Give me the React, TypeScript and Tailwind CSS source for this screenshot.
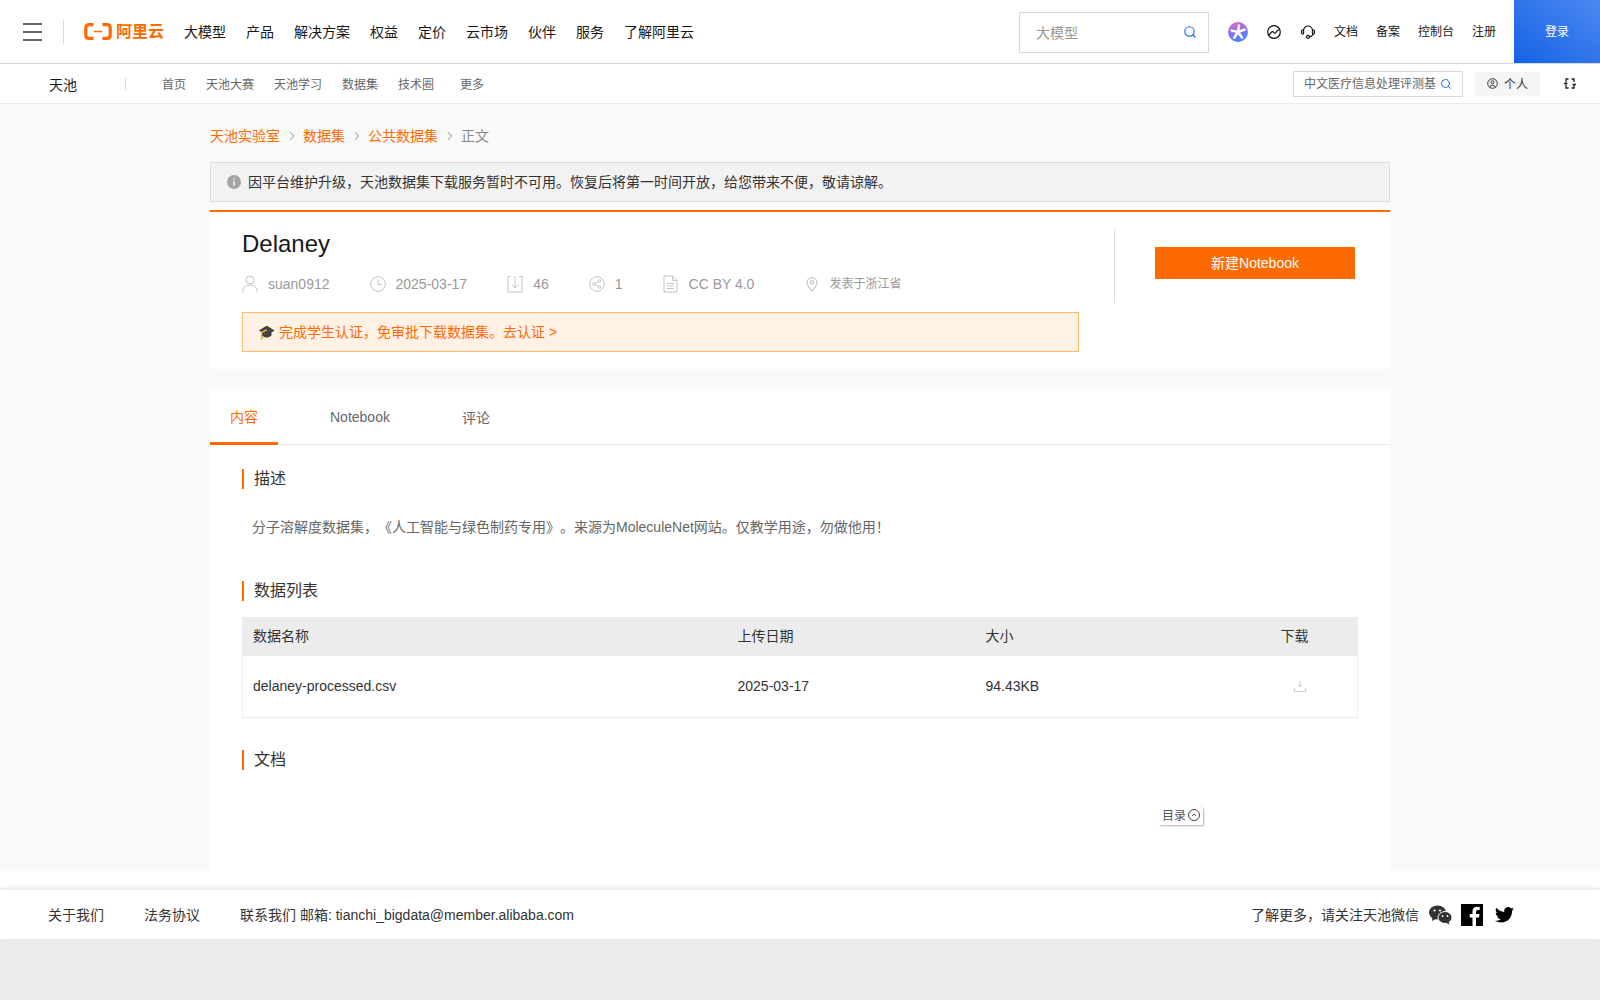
import { ChevronRight, Search } from 'lucide-react'

const SANS = 'font-["Liberation_Sans","Noto_Sans_CJK_SC",sans-serif]'

const NAV = ['大模型', '产品', '解决方案', '权益', '定价', '云市场', '伙伴', '服务', '了解阿里云']
const SUBNAV = ['首页', '天池大赛', '天池学习', '数据集', '技术圈']

function SectionTitle({ children }: { children: string }) {
  return <h2 className="border-l-2 border-[#ff6a00] pl-2.5 text-base leading-5 font-normal text-[#333]">{children}</h2>
}

function Logo() {
  return (
    <div className="flex items-center gap-1 text-[#ff6a00]">
      <svg width="28" height="17" viewBox="0 0 28 17" fill="none">
        <path d="M9.5 1.6H5Q1.8 1.6 1.8 4.6V12.4Q1.8 15.4 5 15.4H9.5M18.5 1.6H23Q26.2 1.6 26.2 4.6V12.4Q26.2 15.4 23 15.4H18.5" stroke="#ff6a00" strokeWidth="3.2" />
        <path d="M10 8.5H18" stroke="#ff6a00" strokeWidth="1.5" />
      </svg>
      <span className="w-[47px] text-[16px] leading-[18px] font-bold whitespace-nowrap">阿里云</span>
    </div>
  )
}

function HeaderIcons() {
  return (
    <>
      <svg width="20" height="20" viewBox="0 0 20 20" className="mr-[19px]">
        <defs>
          <linearGradient id="star" x1="0.3" y1="0" x2="0.6" y2="1">
            <stop offset="0" stopColor="#dc6cc4" />
            <stop offset="0.5" stopColor="#8a70ec" />
            <stop offset="1" stopColor="#3a8cf6" />
          </linearGradient>
        </defs>
        <circle cx="10" cy="10" r="10" fill="url(#star)" />
        <path d="M10 10L11 3.5M10 10L3.8 8.6M10 10L16.6 7.6M10 10L6.2 15.8M10 10L14 15.6" stroke="#fff" strokeWidth="2.5" strokeLinecap="round" />
      </svg>
      <svg width="14" height="14" viewBox="0 0 14 14" fill="none" stroke="#111" strokeWidth="1.2" className="mr-5">
        <circle cx="7" cy="7" r="6.3" />
        <path d="M1.6 10C3.5 9.5 3.8 6.8 5.4 6.6C6.8 6.4 6.6 8.6 8 8.2C9.6 7.8 9.2 5 12.6 4.6" />
      </svg>
      <svg width="14" height="14" viewBox="0 0 14 14" fill="none" stroke="#111" strokeWidth="1.2" className="mr-[19px]">
        <path d="M2.5 5.5A4.5 4.5 0 0 1 11.5 5.5" />
        <rect x="0.6" y="5" width="2" height="4" rx="1" />
        <rect x="11.4" y="5" width="2" height="4" rx="1" />
        <path d="M12 9Q11.5 11.5 8.6 11.8" />
        <circle cx="7" cy="11.8" r="1.5" />
      </svg>
    </>
  )
}

function UserIcon() {
  return (
    <svg width="16" height="18" viewBox="0 0 16 18" fill="none" stroke="#c4c4c4">
      <circle cx="8" cy="5" r="4" />
      <path d="M0.5 17.5Q1 10 8 10Q15 10 15.5 17.5" />
    </svg>
  )
}

function ClockIcon() {
  return (
    <svg width="16" height="16" viewBox="0 0 16 16" fill="none" stroke="#c4c4c4">
      <circle cx="8" cy="8" r="7.3" />
      <path d="M8 3.5V8.5H12" />
    </svg>
  )
}

function DownIcon() {
  return (
    <svg width="16" height="18" viewBox="0 0 16 18" fill="none" stroke="#c4c4c4">
      <path d="M4 1.5H1V17H15V1.5H12" />
      <path d="M8 1V13M4.5 9.5L8 13L11.5 9.5" />
    </svg>
  )
}

function ShareIcon() {
  return (
    <svg width="16" height="16" viewBox="0 0 16 16" fill="none" stroke="#c4c4c4">
      <circle cx="8" cy="8" r="7.3" />
      <circle cx="5" cy="8" r="1.3" />
      <circle cx="10.5" cy="5" r="1.3" />
      <circle cx="10.5" cy="11" r="1.3" />
      <path d="M6.2 7.4L9.3 5.6M6.2 8.6L9.3 10.4" />
    </svg>
  )
}

function DocIcon() {
  return (
    <svg width="15" height="18" viewBox="0 0 15 18" fill="none" stroke="#c4c4c4">
      <path d="M1 1H9.5L14 5.5V17H1Z" />
      <path d="M9.5 1V5.5H14M4 8.5H11M4 11H11M4 13.5H11" />
    </svg>
  )
}

function PinIcon() {
  return (
    <svg width="12" height="15" viewBox="0 0 12 15" fill="none" stroke="#b5b5b5">
      <path d="M6 14.3Q1 8.5 1 5.5A5 5 0 0 1 11 5.5Q11 8.5 6 14.3Z" />
      <circle cx="6" cy="5.3" r="1.8" />
    </svg>
  )
}

export default function App() {
  return (
    <div className={`flex min-h-screen flex-col bg-[#ececec] [text-spacing-trim:space-all] ${SANS}`}>
      {/* top bar */}
      <header className="flex h-16 items-center border-b border-[#d9d9d9] bg-white pl-[23px]">
        <div className="flex flex-col gap-[6px]">
          <span className="h-0.5 w-[19px] bg-[#666]" />
          <span className="h-0.5 w-[19px] bg-[#666]" />
          <span className="h-0.5 w-[19px] bg-[#666]" />
        </div>
        <div className="mr-5 ml-[21px] h-6 w-px bg-[#d9d9d9]" />
        <Logo />
        <nav className="ml-[21px] flex gap-5 text-sm text-[#181818]">
          {NAV.map(n => <span key={n}>{n}</span>)}
        </nav>
        <div className="ml-auto flex h-full items-center">
          <div className="mt-[2px] mr-[19px] flex h-[41px] w-[190px] items-center justify-between border border-[#d9d9d9] pr-[11px] pl-4 text-sm text-[#999]">
            <span>大模型</span>
            <Search size={14} className="mb-0.5 text-[#1b6ef3]" />
          </div>
          <HeaderIcons />
          <div className="flex gap-[18px] text-xs text-[#181818]">
            <span>文档</span>
            <span>备案</span>
            <span>控制台</span>
            <span>注册</span>
          </div>
          <button className="ml-[18px] h-full w-[86px] bg-gradient-to-tr from-[#0f62e6] to-[#4b87f0] text-xs text-white">登录</button>
        </div>
      </header>

      {/* tianchi nav */}
      <div className="flex h-10 items-center border-b border-[#ececec] bg-white pl-[49px]">
        <span className="pt-[2px] text-sm text-[#181818]">天池</span>
        <span className="mr-9 ml-12 h-3 w-px bg-[#d9d9d9]" />
        <div className="flex gap-5 pt-[2px] text-xs text-[#666]">
          {SUBNAV.map(n => <span key={n}>{n}</span>)}
          <span className="ml-1.5">更多</span>
        </div>
        <div className="ml-auto flex items-center pr-6">
          <div className="flex h-[26px] w-[170px] items-center justify-between border border-[#d9d9d9] pr-[10px] pl-2.5 text-xs whitespace-nowrap text-[#666]">
            <span>中文医疗信息处理评测基</span>
            <Search size={12} className="text-[#1b6ef3]" />
          </div>
          <div className="ml-3 flex h-6 w-[65px] items-center justify-center gap-1.5 bg-[#f5f5f5] pt-[2px] text-xs text-[#333]">
            <svg width="11" height="11" viewBox="0 0 11 11" fill="none" stroke="#333" className="mb-[2px]">
              <circle cx="5.5" cy="5.5" r="4.8" />
              <circle cx="5.5" cy="4.2" r="1.5" />
              <path d="M2.5 9Q5.5 5.5 8.5 9" />
            </svg>
            <span>个人</span>
          </div>
          <svg width="12" height="11" viewBox="0 0 12 11" fill="none" stroke="#222" strokeWidth="1.3" className="ml-6">
            <path d="M4.5 1H2V4.5M7.5 1H10V4M2 6.5V10H4.5M10 7V10H7.5M0 5.5H3.5M8.5 6.5H12" />
          </svg>
        </div>
      </div>

      {/* page */}
      <main className="bg-[#f9f9f9]">
        <div className="mx-auto w-[1180px]">
          <div className="flex h-[58px] items-center gap-[5px] pt-[6px] text-sm text-[#ff6a00]">
            <span>天池实验室</span>
            <ChevronRight size={14} strokeWidth={1.5} className="-mr-px text-[#777]" />
            <span>数据集</span>
            <ChevronRight size={14} strokeWidth={1.5} className="-mr-px text-[#777]" />
            <span>公共数据集</span>
            <ChevronRight size={14} strokeWidth={1.5} className="-mr-px text-[#777]" />
            <span className="text-[#888]">正文</span>
          </div>

          <div className="flex h-10 items-center gap-[7px] border border-[#ddd] bg-[#f2f2f2] pl-4 text-sm text-[#333]">
            <svg width="14" height="14" viewBox="0 0 14 14">
              <circle cx="7" cy="7" r="7" fill="#a3a3a3" />
              <path d="M7 6.2V10.8M7 3.2V4.8" stroke="#f2f2f2" strokeWidth="1.6" />
            </svg>
            <span>因平台维护升级，天池数据集下载服务暂时不可用。恢复后将第一时间开放，给您带来不便，敬请谅解。</span>
          </div>

          {/* dataset head */}
          <section className="mt-2 flex h-[159px] border-t-2 border-[#ff6a00] bg-white pt-[17px] pl-8">
            <div className="w-[837px]">
              <h1 className="text-2xl leading-[30px] font-normal text-[#181818]">Delaney</h1>
              <div className="mt-3 flex h-[26px] items-center text-sm text-[#999]">
                <UserIcon /><span className="ml-2.5">suan0912</span>
                <span className="ml-10"><ClockIcon /></span><span className="ml-[10px]">2025-03-17</span>
                <span className="ml-10"><DownIcon /></span><span className="ml-[10px]">46</span>
                <span className="ml-10"><ShareIcon /></span><span className="ml-[10px]">1</span>
                <span className="ml-10"><DocIcon /></span><span className="ml-[11px]">CC BY 4.0</span>
                <span className="ml-[52px]"><PinIcon /></span><span className="ml-[11px] text-xs">发表于浙江省</span>
              </div>
              <div className="mt-[15px] flex h-10 items-center border border-[#ffb972] bg-[#fff2e5] pl-[15px] text-sm text-[#ff6a00]">
                <span className="mr-1 text-[#333]">🎓</span>
                <span>完成学生认证，免审批下载数据集。去认证 &gt;</span>
              </div>
            </div>
            <div className="ml-[35px] flex h-[74px] flex-1 items-center border-l border-[#ddd] pb-[6px] pl-10">
              <button className="h-8 w-[200px] bg-[#ff6a00] text-sm text-white">新建Notebook</button>
            </div>
          </section>

          {/* tabs + content */}
          <section className="relative mt-5 h-[482px] bg-white">
            <div className="flex h-14 border-b border-[#ececec] text-sm text-[#666]">
              <span className="flex h-14 w-[68px] items-center justify-center border-b-[3px] border-[#ff6a00] pt-[2px] text-[#ff6a00]">内容</span>
              <span className="ml-[52px] flex items-center">Notebook</span>
              <span className="ml-[72px] flex items-center pt-[2px]">评论</span>
            </div>
            <div className="px-8 pt-6">
              <SectionTitle>描述</SectionTitle>
              <p className="mt-[28px] pl-2.5 text-sm leading-5 text-[#666]">分子溶解度数据集，《人工智能与绿色制药专用》。来源为MoleculeNet网站。仅教学用途，勿做他用！</p>
              <div className="mt-[44px]"><SectionTitle>数据列表</SectionTitle></div>
              <table className="mt-4 w-[1116px] table-fixed border border-[#ececec] text-sm text-[#333]">
                <thead>
                  <tr className="h-[38px] bg-[#ececec] text-left">
                    <th className="w-[495px] pb-[2px] pl-[10px] font-normal">数据名称</th>
                    <th className="w-[248px] pb-[2px] font-normal">上传日期</th>
                    <th className="w-[295px] pb-[2px] font-normal">大小</th>
                    <th className="pb-[2px] font-normal">下载</th>
                  </tr>
                </thead>
                <tbody>
                  <tr className="h-[62px]">
                    <td className="pl-[10px]">delaney-processed.csv</td>
                    <td>2025-03-17</td>
                    <td>94.43KB</td>
                    <td>
                      <svg width="12" height="12" viewBox="0 0 12 12" fill="none" stroke="#ccc" className="ml-[13px]">
                        <path d="M6 0.5V7M3.8 5L6 7L8.2 5M0.5 8V11.5H11.5V8" />
                      </svg>
                    </td>
                  </tr>
                </tbody>
              </table>
              <div className="mt-[32px]"><SectionTitle>文档</SectionTitle></div>
            </div>
            <div className="absolute top-[417px] left-[949px] flex h-[19px] w-[44px] items-center justify-center gap-0.5 rounded-tr-sm bg-white text-xs text-[#555] shadow-[1px_1px_2px_rgba(0,0,0,0.3)]">
              <span>目录</span>
              <svg width="12" height="12" viewBox="0 0 12 12" fill="none" stroke="#444" className="mb-0.5">
                <circle cx="6" cy="6" r="5.5" />
                <path d="M4 7L6 5L8 7" />
              </svg>
            </div>
          </section>
        </div>
      </main>

      <div className="h-[19px] bg-white" />

      {/* footer */}
      <footer className="flex h-[49px] items-center bg-white pr-[86px] pl-12 text-sm text-[#333] shadow-[0_-2px_4px_rgba(0,0,0,0.1)]">
        <span>关于我们</span>
        <span className="ml-10">法务协议</span>
        <span className="ml-10">联系我们 邮箱: tianchi_bigdata@member.alibaba.com</span>
        <span className="ml-auto">了解更多，请关注天池微信</span>
        <svg width="23" height="20" viewBox="0 0 23 20" className="ml-[10px]" fill="#333">
          <ellipse cx="8.5" cy="7.5" rx="8.5" ry="7" />
          <path d="M3.5 12L3 16L7.5 13.5Z" />
          <ellipse cx="16" cy="12.5" rx="7" ry="6" stroke="#fff" />
          <path d="M19.5 16.5L20.5 19.5L17 17.8Z" />
          <circle cx="5.5" cy="5.5" r="1.1" fill="#fff" />
          <circle cx="11" cy="5.5" r="1.1" fill="#fff" />
          <circle cx="13.5" cy="11" r="0.9" fill="#fff" />
          <circle cx="18.5" cy="11" r="0.9" fill="#fff" />
        </svg>
        <svg width="22" height="22" viewBox="0 0 22 22" className="ml-[9px]">
          <rect width="22" height="22" fill="#000" />
          <path d="M15 22V13.5H18L18.5 10H15V8Q15 6 17 6H18.7V3Q17.5 2.8 16.2 2.8Q11.5 2.8 11.5 7.5V10H8.7V13.5H11.5V22Z" fill="#fff" />
        </svg>
        <svg width="19" height="16" viewBox="0 0 24 20" className="ml-3" fill="#000">
          <path d="M24 2.4a9.8 9.8 0 0 1-2.8.8A4.9 4.9 0 0 0 23.3.5a9.8 9.8 0 0 1-3.1 1.2 4.9 4.9 0 0 0-8.4 4.5A14 14 0 0 1 1.7.9a4.9 4.9 0 0 0 1.5 6.6 4.9 4.9 0 0 1-2.2-.6 4.9 4.9 0 0 0 3.9 4.9 4.9 4.9 0 0 1-2.2.1 4.9 4.9 0 0 0 4.6 3.4A9.9 9.9 0 0 1 0 17.3 14 14 0 0 0 7.5 19.5c9 0 14-7.5 14-14v-.6A10 10 0 0 0 24 2.4z" />
        </svg>
      </footer>
    </div>
  )
}
